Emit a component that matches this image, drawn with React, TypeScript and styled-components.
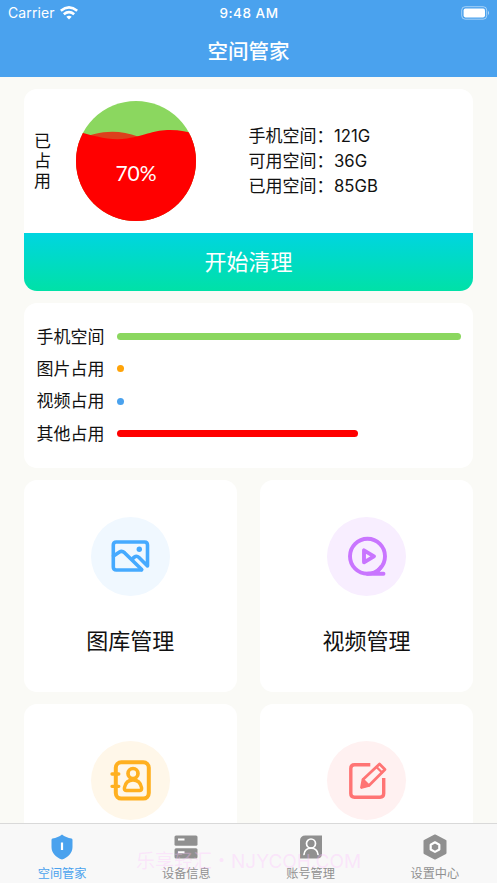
import React from "react";
import styled, { createGlobalStyle } from "styled-components";

const GlobalStyle = createGlobalStyle`
  * { box-sizing: border-box; }
  html, body { margin: 0; height: 100%; overflow: hidden; }
  body { font-family: Inter, "Noto Sans CJK SC", sans-serif; color: #111; background: #fafaf6; }
`;

const Screen = styled.div`
  height: 883px;
  display: flex;
  flex-direction: column;
  overflow: hidden;
  background: #fafaf6;
`;
const Header = styled.header`
  flex: none;
  height: 77px;
  background: #4aa2ee;
  color: #fff;
`;
const StatusBar = styled.div`
  height: 25px;
  padding: 0 7px 0 8px;
  display: grid;
  grid-template-columns: 1fr auto 1fr;
  align-items: center;
  font-size: 14px;
  line-height: 26px;
`;
const Carrier = styled.div`
  display: flex;
  align-items: center;
  gap: 5px;
  letter-spacing: 0.1px;
`;
const Clock = styled.div`
  font-size: 13.5px;
  font-weight: 500;
  letter-spacing: 0.5px;
`;
const Battery = styled.svg`
  justify-self: end;
  margin-bottom: 1px;
`;
const Title = styled.h1`
  margin: 0;
  height: 52px;
  line-height: 53px;
  text-align: center;
  font-size: 20.5px;
  font-weight: 500;
`;
const Content = styled.main`
  flex: 1;
  min-height: 0;
  overflow: hidden;
  padding: 12px 24px 0;
  display: flex;
  flex-direction: column;
  gap: 12px;
`;
const Card = styled.section`
  flex: none;
  background: #fff;
  border-radius: 13px;
  overflow: hidden;
`;
const Summary = styled.div`
  height: 144px;
  display: flex;
  align-items: center;
`;
const UsedLabel = styled.div`
  width: 17px;
  margin-left: 10px;
  font-size: 17px;
  line-height: 20px;
`;
const Gauge = styled.svg`
  flex: none;
  margin-left: 25px;
`;
const Percent = styled.text`
  font: 21px Lato, sans-serif;
  fill: #fff;
`;
const Stats = styled.dl`
  margin: 0 0 0 52.5px;
  font-size: 17px;
  line-height: 25px;
`;
const Stat = styled.div`
  display: flex;
`;
const StatName = styled.dt`
  width: 85.5px;
`;
const StatValue = styled.dd`
  margin: 0;
  font-size: 16.7px;
`;
const CleanButton = styled.button`
  display: block;
  width: 100%;
  height: 57.5px;
  border: 0;
  padding: 0 0 2px;
  color: #fff;
  font: 22px/55px "Noto Sans CJK SC", sans-serif;
  background: linear-gradient(#00d5e0, #00e1a7);
`;
const UsageCard = styled(Card)`
  height: 165.5px;
  padding: 18px 12px 0;
`;
const UsageRow = styled.div`
  height: 32.3px;
  display: flex;
  align-items: center;
`;
const UsageName = styled.div`
  width: 80.5px;
  margin-left: 0.5px;
  font-size: 17px;
  line-height: 24px;
`;
const Bar = styled.div<{ $color: string; $width: number }>`
  width: ${(p) => p.$width}px;
  height: 7px;
  border-radius: 4px;
  background: ${(p) => p.$color};
`;
const Tiles = styled.div`
  display: grid;
  grid-template-columns: 1fr 1fr;
  column-gap: 23.5px;
  row-gap: 12px;
`;
const Tile = styled(Card)`
  height: 212px;
  padding-top: 36.5px;
  display: flex;
  flex-direction: column;
  align-items: center;
`;
const IconDisc = styled.div<{ $bg: string; $fg: string }>`
  flex: none;
  width: 79px;
  height: 79px;
  border-radius: 50%;
  display: grid;
  place-items: center;
  background: ${(p) => p.$bg};
  color: ${(p) => p.$fg};
`;
const TileName = styled.div`
  margin-top: 29px;
  font-size: 22px;
  line-height: 32px;
`;
const TabBar = styled.nav`
  position: relative;
  flex: none;
  height: 60px;
  display: grid;
  grid-template-columns: repeat(4, 1fr);
  border-top: 1px solid #d9d9d9;
  background: #f8f8f8;
`;
const Tab = styled.div<{ $active?: boolean }>`
  display: flex;
  flex-direction: column;
  align-items: center;
  padding-top: 9px;
  color: ${(p) => (p.$active ? "#4aa2ee" : "#909090")};
  font-size: 12.2px;
  line-height: 18px;
  gap: 4px;
`;
const Watermark = styled.div`
  position: absolute;
  left: 136px;
  top: 24px;
  white-space: nowrap;
  font-size: 19px;
  line-height: 27px;
  color: rgba(255, 190, 255, 0.32);
  pointer-events: none;
`;

const stroke = {
  fill: "none",
  stroke: "currentColor",
  strokeLinecap: "round" as const,
  strokeLinejoin: "round" as const,
};

const PhotoIcon = () => (
  <svg width="44" height="44" viewBox="0 0 44 44" {...stroke} strokeWidth="3.6">
    <path d="M33.500 36H8.300Q5.300 36 5.300 33V11Q5.300 8 8.300 8H36.500Q39.500 8 39.500 11V32L31 23.500Q28.700 21.300 26.500 23L24.700 24.500" />
    <path d="M5.500 22L11.500 18Q14 16.500 16.500 18.700L33.700 35.500" />
    <circle cx="31.300" cy="15.300" r="2.700" fill="currentColor" stroke="none" />
  </svg>
);
const VideoIcon = () => (
  <svg width="44" height="44" viewBox="0 0 44 44" {...stroke} strokeWidth="3.900">
    <circle cx="22.500" cy="22.300" r="17.500" />
    <path d="M22.500 39.800H38.500M36 33Q33.500 37 29.500 39.500" />
    <path d="M19 16.300V28.300L29 22.300Z" />
  </svg>
);
const ContactsIcon = () => (
  <svg width="44" height="44" viewBox="0 0 44 44" {...stroke} strokeWidth="4">
    <rect x="7.800" y="4.300" width="33" height="36.300" rx="5.500" />
    <path d="M4 16H10.800M4 28.300H10.800" strokeWidth="3.300" />
    <circle cx="25" cy="15.500" r="5" strokeWidth="3.700" />
    <path d="M18 32.500H32Q34 32.500 33.500 29.500C32.500 24.500 29.500 22 25 22S17.500 24.500 16.500 29.500Q16 32.500 18 32.500Z" strokeWidth="3.500" />
  </svg>
);
const EditIcon = () => (
  <svg width="44" height="44" viewBox="0 0 44 44" {...stroke} strokeWidth="3.400">
    <path d="M25.300 6.700H9.500Q5.800 6.700 5.800 10.500V35.500Q5.800 39.200 9.500 39.200H35Q38.700 39.200 38.700 35.500V20" strokeLinecap="butt" />
    <path d="M18 21.500L34.500 6L40 11.500L24 27.500L16.500 29.500Z" strokeWidth="2.800" />
    <path d="M31.500 9L37 14.500M18 21.500L24 27.500" strokeWidth="2.300" />
    <path d="M16.300 29.500L18 22.500L23.500 27.500Z" fill="currentColor" strokeWidth="1" />
  </svg>
);
const ShieldIcon = () => (
  <svg width="26" height="28" viewBox="0 0 26 28">
    <path d="M13 1.500C15.500 3.500 19 5 22.500 5.500Q23.500 5.700 23.500 7V14C23.500 20 19 24.500 13 26.500C7 24.500 2.500 20 2.500 14V7Q2.500 5.700 3.500 5.500C7 5 10.500 3.500 13 1.500Z" fill="currentColor" />
    <path d="M13 9.500V17" stroke="#fff" strokeWidth="2.200" />
  </svg>
);
const ServerIcon = () => (
  <svg width="26" height="28" viewBox="0 0 26 28">
    <rect x="1.500" y="2.500" width="23" height="10.300" rx="1.500" fill="currentColor" />
    <rect x="1.500" y="15.300" width="23" height="10.300" rx="1.500" fill="currentColor" />
    <path d="M5 6.500H11.500M5 19.300H11.500" stroke="#fff" strokeWidth="2" />
  </svg>
);
const AccountIcon = () => (
  <svg width="26" height="28" viewBox="0 0 26 28">
    <path d="M7.500 2.500H24V20.500Q24 25.500 19 25.500H2V8Q2 2.500 7.500 2.500Z" fill="currentColor" />
    <g fill="none" stroke="#fff" strokeWidth="1.700" strokeLinecap="round">
      <circle cx="13" cy="10.500" r="4.500" />
      <path d="M6 21.500C6.500 13 19.500 13 20 21.500" />
    </g>
  </svg>
);
const SettingsIcon = () => (
  <svg width="26" height="28" viewBox="0 0 26 28">
    <path d="M13 2.500L23.500 8V20L13 25.500L2.500 20V8Z" fill="currentColor" stroke="currentColor" strokeWidth="2" strokeLinejoin="round" />
    <path d="M13 9.300L17.300 11.700V16.500L13 18.900L8.700 16.500V11.700Z" fill="none" stroke="#fff" strokeWidth="2.200" strokeLinejoin="round" />
  </svg>
);

const stats = [
  ["手机空间：", "121G"],
  ["可用空间：", "36G"],
  ["已用空间：", "85GB"],
];
const usage = [
  { name: "手机空间", color: "#8bd75f", width: 344 },
  { name: "图片占用", color: "#ffa308", width: 7 },
  { name: "视频占用", color: "#4aa2ee", width: 7 },
  { name: "其他占用", color: "#ff0000", width: 241 },
];
const tiles = [
  { id: "photos", name: "图库管理", bg: "#f0f8ff", fg: "#46aaff", Icon: PhotoIcon },
  { id: "videos", name: "视频管理", bg: "#f8eeff", fg: "#c975ff", Icon: VideoIcon },
  { id: "contacts", name: "", bg: "#fff7e9", fg: "#ffb020", Icon: ContactsIcon },
  { id: "notes", name: "", bg: "#fff1f1", fg: "#ff7474", Icon: EditIcon },
];
const tabs = [
  { name: "空间管家", Icon: ShieldIcon },
  { name: "设备信息", Icon: ServerIcon },
  { name: "账号管理", Icon: AccountIcon },
  { name: "设置中心", Icon: SettingsIcon },
];

export default function App() {
  return (
    <Screen>
      <GlobalStyle />
      <Header>
        <StatusBar>
          <Carrier>
            Carrier
            <svg width="18" height="14" viewBox="0 0 18 14" fill="none" stroke="#fff" strokeWidth="2.600">
              <path d="M0.800 4.800Q9-2 17.200 4.800M3.800 8.200Q9 4 14.200 8.200" />
              <path d="M9 13.500L6.300 10.800Q9 8.500 11.700 10.800Z" fill="#fff" stroke="none" />
            </svg>
          </Carrier>
          <Clock>9:48 AM</Clock>
          <Battery width="29" height="14" viewBox="0 0 29 14">
            <rect x="0.700" y="0.700" width="25" height="12.500" rx="3.500" fill="none" stroke="#fff" strokeOpacity=".5" />
            <rect x="2.600" y="2.600" width="21.400" height="8.800" rx="1.800" fill="#fff" />
            <path d="M27 4.800Q29 7 27 9.200Z" fill="#fff" fillOpacity=".6" />
          </Battery>
        </StatusBar>
        <Title>空间管家</Title>
      </Header>
      <Content>
        <Card>
          <Summary>
            <UsedLabel>已占用</UsedLabel>
            <Gauge width="120" height="120" viewBox="0 0 120 120">
              <defs>
                <clipPath id="gauge"><circle cx="60" cy="60" r="60" /></clipPath>
              </defs>
              <g clipPath="url(#gauge)">
                <rect width="120" height="120" fill="#8bd75f" />
                <path d="M0 40C22 29 42 28 62 35.500C80 42 100 38 120 33V120H0Z" fill="#ff0000" fillOpacity=".7" />
                <path d="M0 30C18 35 34 40 51 37.500C71 34 78 29 94 29C104 29 112 31 120 33V120H0Z" fill="#ff0000" />
              </g>
              <Percent x="60" y="80" textAnchor="middle">70%</Percent>
            </Gauge>
            <Stats>
              {stats.map(([name, value]) => (
                <Stat key={name}>
                  <StatName>{name}</StatName>
                  <StatValue>{value}</StatValue>
                </Stat>
              ))}
            </Stats>
          </Summary>
          <CleanButton>开始清理</CleanButton>
        </Card>
        <UsageCard>
          {usage.map((u) => (
            <UsageRow key={u.name}>
              <UsageName>{u.name}</UsageName>
              <Bar $color={u.color} $width={u.width} />
            </UsageRow>
          ))}
        </UsageCard>
        <Tiles>
          {tiles.map(({ id, name, bg, fg, Icon }) => (
            <Tile key={id}>
              <IconDisc $bg={bg} $fg={fg}><Icon /></IconDisc>
              {name && <TileName>{name}</TileName>}
            </Tile>
          ))}
        </Tiles>
      </Content>
      <TabBar>
        {tabs.map(({ name, Icon }, i) => (
          <Tab key={name} $active={i === 0}>
            <Icon />
            {name}
          </Tab>
        ))}
        <Watermark>乐享轻汇・NJYCOH.COM</Watermark>
      </TabBar>
    </Screen>
  );
}
